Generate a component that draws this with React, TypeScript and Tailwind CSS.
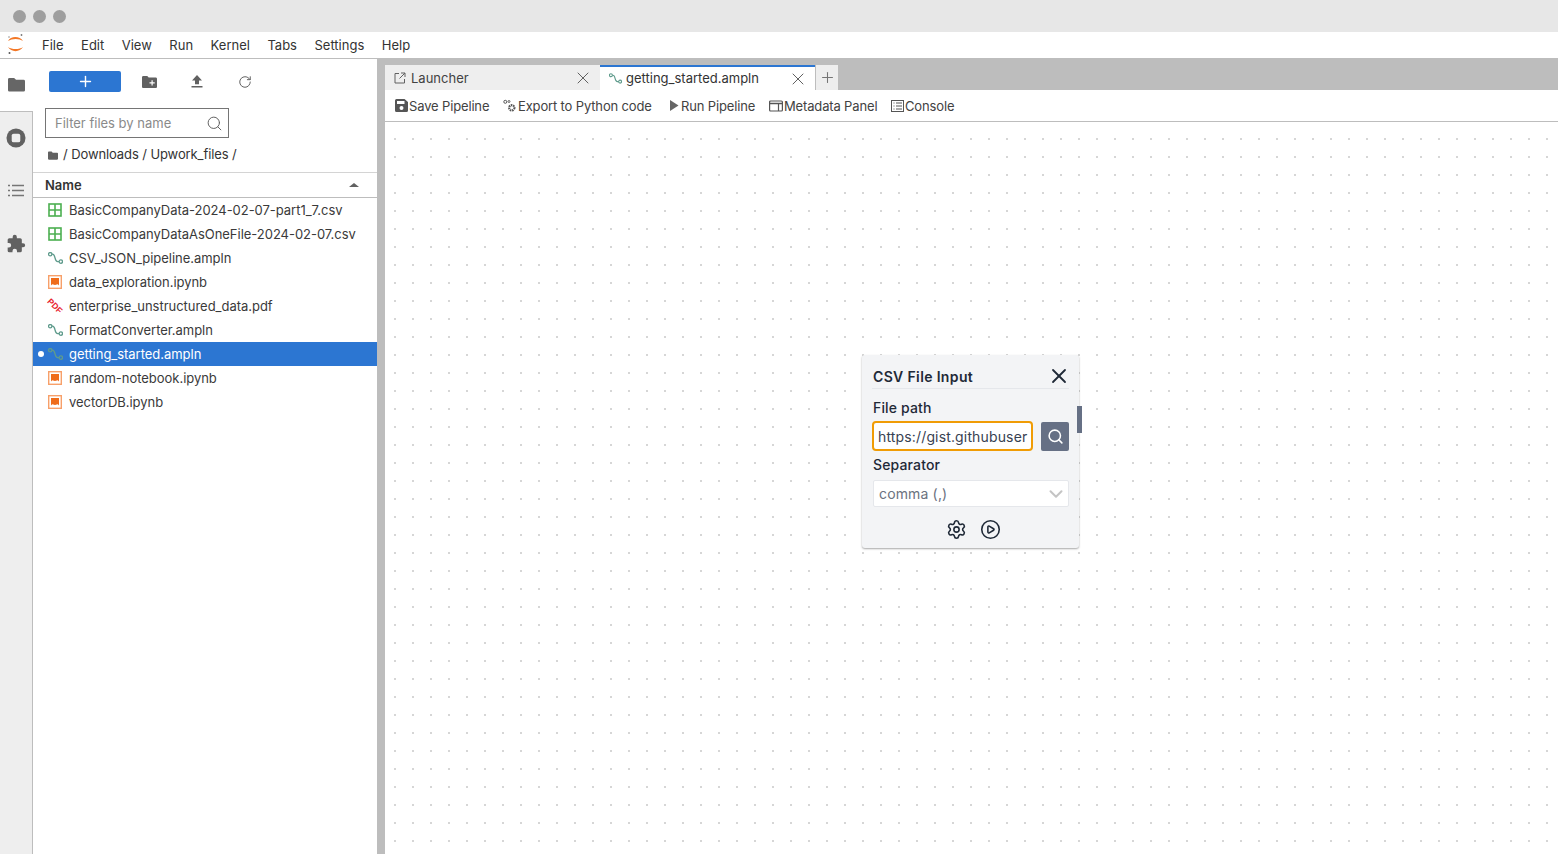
import React from "react";
import { X, Plus, Search, Settings, CirclePlay, ChevronDown, RotateCw } from "lucide-react";

const PipeIcon = ({ w = 15, h = 12 }: { w?: number; h?: number }) => (
  <svg width={w} height={h} viewBox="0 0 15 12" fill="none" stroke="#5f9b8c" strokeWidth="1.300">
    <circle cx="2.200" cy="2.200" r="1.700" />
    <circle cx="12.800" cy="9.600" r="1.700" />
    <path d="M3.900 2.200H4.500C6.200 2.200 6.500 3.800 7 5.800S8 9.600 9.600 9.600H11.100" />
  </svg>
);
const GridIcon = () => (
  <svg width="14" height="14" viewBox="0 0 14 14" fill="none" stroke="#4caf50" strokeWidth="1.600">
    <rect x="1" y="1" width="12" height="12" />
    <path d="M7 1v12M1 7h12" />
  </svg>
);
const NotebookIcon = () => (
  <svg width="14" height="14" viewBox="0 0 14 14">
    <rect x="0.700" y="0.700" width="12.600" height="12.600" fill="#fff" stroke="#f7a06a" strokeWidth="1.400" />
    <path d="M3 3h8v7.600L9.800 9.300 7 10 4.200 9.300 3 10.600z" fill="#ef6c1a" />
  </svg>
);
const PdfIcon = () => (
  <svg width="18" height="18" viewBox="0 0 18 18" className="-mx-px">
    <text x="9" y="12" textAnchor="middle" fontSize="8.500" fontWeight="700" fill="#e8222e" fontFamily="Liberation Sans, sans-serif" transform="rotate(45 9 9)">PDF</text>
  </svg>
);

const files: { n: string; t: "csv" | "pipe" | "nb" | "pdf"; active?: boolean }[] = [
  { n: "BasicCompanyData-2024-02-07-part1_7.csv", t: "csv" },
  { n: "BasicCompanyDataAsOneFile-2024-02-07.csv", t: "csv" },
  { n: "CSV_JSON_pipeline.ampln", t: "pipe" },
  { n: "data_exploration.ipynb", t: "nb" },
  { n: "enterprise_unstructured_data.pdf", t: "pdf" },
  { n: "FormatConverter.ampln", t: "pipe" },
  { n: "getting_started.ampln", t: "pipe", active: true },
  { n: "random-notebook.ipynb", t: "nb" },
  { n: "vectorDB.ipynb", t: "nb" },
];

const FileRow = ({ f }: { f: (typeof files)[number] }) => (
  <div className={`relative flex h-6 items-center pl-[14px] ${f.active ? "bg-[#2c76d2] text-white" : "text-[#3a3a3a]"}`}>
    {f.active && <span className="absolute left-[5px] top-[9px] h-[6px] w-[6px] rounded-full bg-white" />}
    <span className="flex w-[16px] justify-center">
      {f.t === "csv" && <GridIcon />}
      {f.t === "pipe" && <PipeIcon />}
      {f.t === "nb" && <NotebookIcon />}
      {f.t === "pdf" && <PdfIcon />}
    </span>
    <span className="ml-[6px] pt-[2px] tracking-[-0.03px]">{f.n}</span>
  </div>
);

const Tool = ({ icon, label, cls }: { icon: React.ReactNode; label: string; cls: string }) => (
  <div className={`flex items-center gap-[1px] ${cls}`}>
    {icon}
    <span className="pt-[2px] tracking-[-0.15px]">{label}</span>
  </div>
);

export default function App() {
  return (
    <div className="flex h-[854px] w-[1558px] flex-col overflow-hidden bg-white text-[13px] text-[#333] [font-family:Inter,'Liberation_Sans',sans-serif]">
      {/* Window chrome */}
      <div className="flex h-8 shrink-0 items-center gap-[7px] bg-[#e7e7e7] pl-[13px]">
        <span className="h-[13px] w-[13px] rounded-full bg-[#9e9e9e]" />
        <span className="h-[13px] w-[13px] rounded-full bg-[#9e9e9e]" />
        <span className="h-[13px] w-[13px] rounded-full bg-[#9e9e9e]" />
      </div>
      {/* Menu */}
      <div className="flex h-[27px] shrink-0 items-center border-b border-[#bdbdbd]">
        <svg className="ml-[6px] mr-[17px]" width="19" height="24" viewBox="0 0 19 24">
          <path d="M2 8C4.500 2.500 14 2.500 17 8 13.500 5.300 6 5.300 2 8z" fill="#f37726" />
          <path d="M2 14C6 16.700 13.500 16.700 17 14 14 19.500 5 19.500 2 14z" fill="#f37726" />
          <circle cx="15.500" cy="2" r="0.900" fill="#777" />
          <circle cx="3" cy="4" r="0.700" fill="#777" />
          <circle cx="3.500" cy="20" r="1" fill="#555" />
        </svg>
        <div className="flex gap-[17.5px] pt-[2px] text-[#333]">
          {["File", "Edit", "View", "Run", "Kernel", "Tabs", "Settings", "Help"].map((m) => (
            <span key={m}>{m}</span>
          ))}
        </div>
      </div>
      <div className="flex min-h-0 flex-1">
        {/* Rail */}
        <div className="flex w-[33px] shrink-0 flex-col border-r border-[#bdbdbd] bg-[#eeeeee] text-[#616161]">
          <div className="relative z-10 -mr-px flex h-[52px] items-center justify-center bg-white pb-[1px]">
            <svg width="17" height="15" viewBox="0 0 18 15" fill="#666666" className="mr-[1px]">
              <path d="M0 2a1.500 1.500 0 0 1 1.500-1.500h5L8.500 2.500h8A1.500 1.500 0 0 1 18 4v9.500a1.500 1.500 0 0 1-1.500 1.500h-15A1.500 1.500 0 0 1 0 13.500z" />
            </svg>
          </div>
          <div className="flex h-[53px] items-center justify-center border-t border-[#bdbdbd] pr-px">
            <svg width="20" height="20" viewBox="0 0 21 21">
              <circle cx="10.500" cy="10.500" r="10" fill="#616161" />
              <rect x="6" y="6" width="9" height="9" rx="2" fill="#eeeeee" />
            </svg>
          </div>
          <div className="flex h-[53px] items-center justify-center pr-px">
            <svg width="16" height="13" viewBox="0 0 16 13" stroke="#757575" strokeWidth="1.400" fill="none">
              <path d="M4 1.500h12M4 6.500h12M4 11.500h12M0 1.500h2M0 6.500h2M0 11.500h2" />
            </svg>
          </div>
          <div className="flex h-[53px] items-center justify-center pr-[1px]">
            <svg width="20" height="20" viewBox="0 0 24 24" fill="#616161">
              <path d="M20.500 11H19V7a2 2 0 0 0-2-2h-4V3.500a2.500 2.500 0 0 0-5 0V5H4a2 2 0 0 0-2 2v3.800h1.500a2.700 2.700 0 0 1 0 5.400H2V20a2 2 0 0 0 2 2h3.800v-1.500a2.700 2.700 0 0 1 5.400 0V22H17a2 2 0 0 0 2-2v-4h1.500a2.500 2.500 0 0 0 0-5z" />
            </svg>
          </div>
        </div>
        {/* File browser */}
        <div className="flex w-[344px] shrink-0 flex-col">
          <div className="flex h-[45px] items-center pl-4 text-[#616161]">
            <div className="flex h-[21px] w-[72px] items-center justify-center rounded-[2px] bg-[#2c76d2] text-white">
              <Plus size={17} strokeWidth={2} />
            </div>
            <svg className="ml-[21px]" width="15" height="12" viewBox="0 0 15 12" fill="#616161">
              <path fillRule="evenodd" d="M0 1.300C0 .6.600 0 1.300 0h4l1.400 1.500h7c.7 0 1.300.6 1.300 1.300v7.900c0 .7-.6 1.300-1.300 1.300H1.300C.6 12 0 11.400 0 10.700zM9.500 4.200v2h-2v1.200h2v2h1.200v-2h2V6.200h-2v-2z" />
            </svg>
            <svg className="ml-[34px]" width="12" height="13" viewBox="0 0 12 13" fill="#616161">
              <path d="M6 0l5 5.500H8v3.800H4V5.500H1zM0.500 11h11v1.500H.5z" />
            </svg>
            <RotateCw className="ml-[35px]" size={14} strokeWidth={1.7} color="#616161" />
          </div>
          <div className="ml-3 mt-1 flex h-[30px] w-[184px] items-center justify-between border border-[#757575] pl-[9px] pr-[5px] text-[13px] text-[#8a8a8a]">
            <span className="pt-[2px]">Filter files by name</span>
            <Search size={17} color="#616161" strokeWidth={1.4} />
          </div>
          <div className="flex h-[34px] items-center pl-[15px] text-[#333]">
            <svg width="10" height="9" viewBox="0 0 18 15" fill="#616161">
              <path d="M0 2a1.500 1.500 0 0 1 1.500-1.500h5L8.500 2.500h8A1.500 1.500 0 0 1 18 4v9.500a1.500 1.500 0 0 1-1.500 1.500h-15A1.500 1.500 0 0 1 0 13.500z" />
            </svg>
            <span className="ml-[5px] tracking-[-0.1px]">/ Downloads / Upwork_files /</span>
          </div>
          <div className="flex h-[26px] items-center justify-between border-y border-[#d4d4d4] border-b-[#bdbdbd] pl-3 pr-[18px] font-semibold text-[#333]">
            <span className="pt-[2px]">Name</span>
            <span className="h-0 w-0 border-x-[5px] border-b-[4px] border-x-transparent border-b-[#616161]" />
          </div>
          <div>
            {files.map((f) => (
              <FileRow key={f.n} f={f} />
            ))}
          </div>
        </div>
        {/* Splitter */}
        <div className="w-2 shrink-0 bg-[#bdbdbd]" />
        {/* Main */}
        <div className="flex min-w-0 flex-1 flex-col">
          <div className="flex h-[31px] shrink-0 items-end bg-[#bdbdbd]">
            <div className="flex h-[25px] w-[215px] items-center justify-between bg-[#eeeeee] pl-[9px] pr-[7px]">
              <div className="flex items-center gap-[5px] text-[#424242]">
                <svg width="12" height="12" viewBox="0 0 12 12" fill="none" stroke="#616161" strokeWidth="1">
                  <path d="M10.500 7v4H1V1.500h4M7 1h4v4M11 1L5.500 6.500" />
                </svg>
                <span className="pt-[2px]">Launcher</span>
              </div>
              <X size={20} color="#616161" strokeWidth={1.2} />
            </div>
            <div className="flex h-[25px] w-[215px] items-center justify-between border-t-2 border-[#2c76d2] bg-white pl-[9px] pr-[7px]">
              <div className="flex items-center gap-[4px]">
                <PipeIcon w={13} h={11} />
                <span className="text-[#333]">getting_started.ampln</span>
              </div>
              <X size={20} color="#616161" strokeWidth={1.2} />
            </div>
            <div className="ml-px flex h-[25px] w-[22px] items-center justify-center bg-[#eeeeee]">
              <Plus size={17} color="#757575" strokeWidth={1.5} />
            </div>
          </div>
          <div className="flex h-[32px] shrink-0 items-center border-b border-[#bdbdbd] pl-[10px] text-[#424242]">
            <Tool
              cls="w-[108px]"
              label="Save Pipeline"
              icon={
                <svg width="13" height="13" viewBox="0 0 13 13" fill="#555">
                  <path fillRule="evenodd" d="M1.500 0h8L13 3v8.500A1.500 1.500 0 0 1 11.500 13h-10A1.500 1.500 0 0 1 0 11.500v-10A1.500 1.500 0 0 1 1.500 0zM2 2v3h7.500V2zM6.500 7a2 2 0 1 0 0 4 2 2 0 0 0 0-4z" />
                </svg>
              }
            />
            <Tool
              cls="w-[167px]"
              label="Export to Python code"
              icon={
                <svg width="14" height="14" viewBox="0 0 14 14" fill="none" stroke="#555">
                  <circle cx="8.800" cy="8.800" r="2.600" strokeWidth="2.200" strokeDasharray="1.500 0.700" />
                  <circle cx="2.300" cy="2.800" r="1.500" strokeWidth="1" />
                  <circle cx="6" cy="2.500" r="1" strokeWidth="0.900" />
                </svg>
              }
            />
            <Tool
              cls="w-[99px]"
              label="Run Pipeline"
              icon={
                <svg className="mr-[1px]" width="9" height="11" viewBox="0 0 9 11" fill="#666">
                  <path d="M0 0l8.500 5.500L0 11z" />
                </svg>
              }
            />
            <Tool
              cls="w-[122px]"
              label="Metadata Panel"
              icon={
                <svg width="14" height="12" viewBox="0 0 14 12" fill="none" stroke="#555" strokeWidth="1.200">
                  <rect x="0.600" y="1" width="12.800" height="10" rx="1" />
                  <path d="M0.600 3.500h12.800" strokeWidth="1.500" />
                  <path d="M9.500 3.500V11" />
                </svg>
              }
            />
            <Tool
              cls=""
              label="Console"
              icon={
                <svg width="13" height="12" viewBox="0 0 13 12" fill="none" stroke="#555" strokeWidth="1">
                  <rect x="0.500" y="0.500" width="12" height="11" />
                  <path d="M2.500 3h1M5 3h6M2.500 6h1M5 6h6M2.500 9h1M5 9h6" />
                </svg>
              }
            />
          </div>
          {/* Canvas */}
          <div className="relative flex-1 bg-[radial-gradient(circle,#d6d6d6_1px,transparent_1px)] bg-[length:18px_18px] bg-[position:1px_8px]">
            <div className="absolute left-[477px] top-[233px] flex h-[193px] w-[217px] flex-col rounded-[3px] bg-[#f3f4f6] px-[10px] text-[#1f2937] shadow-[0_1px_2px_rgba(0,0,0,0.35)]">
              <div className="flex h-[34px] shrink-0 items-center justify-between border-b border-[#e5e7eb] pl-px pt-[9px]">
                <span className="text-[14px] font-semibold tracking-[0.35px]">CSV File Input</span>
                <X size={24} strokeWidth={1.8} color="#1f2937" className="-mr-[2px]" />
              </div>
              <div className="mt-[10px] pl-px text-[14px] font-medium leading-[18px] tracking-[0.15px]">File path</div>
              <div className="mt-[4px] flex items-center justify-between">
                <div className="flex h-[30px] w-[161px] items-center overflow-hidden rounded-[4px] border-2 border-[#f09c05] bg-white pl-[4px] pt-px text-[14px] tracking-[0.15px] whitespace-nowrap text-[#374151]">
                  https://gist.githubuser
                </div>
                <div className="flex h-[29px] w-[28px] items-center justify-center rounded-[2px] bg-[#667085] pl-px">
                  <Search size={17} color="#fff" strokeWidth={2.2} />
                </div>
              </div>
              <div className="mt-[5px] pl-px text-[14px] font-medium leading-[18px] tracking-[0.15px]">Separator</div>
              <div className="ml-[1px] mt-[6px] flex h-[27px] w-[196px] items-center justify-between rounded-[2px] border border-[#e5e7eb] bg-white pl-[5px] pr-[1px] text-[14px] tracking-[0.15px] text-[#6b7280]">
                <span>comma (,)</span>
                <ChevronDown size={22} color="#c4c4c4" strokeWidth={2.2} />
              </div>
              <div className="mt-[12px] flex justify-center gap-[13px] pl-[6px]">
                <Settings size={21} strokeWidth={1.8} color="#1f2937" />
                <CirclePlay size={21} strokeWidth={1.8} color="#1f2937" />
              </div>
              <span className="absolute left-[214.500px] top-[51px] h-[27px] w-[5px] bg-[#667085]" />
            </div>
          </div>
        </div>
      </div>
    </div>
  );
}
